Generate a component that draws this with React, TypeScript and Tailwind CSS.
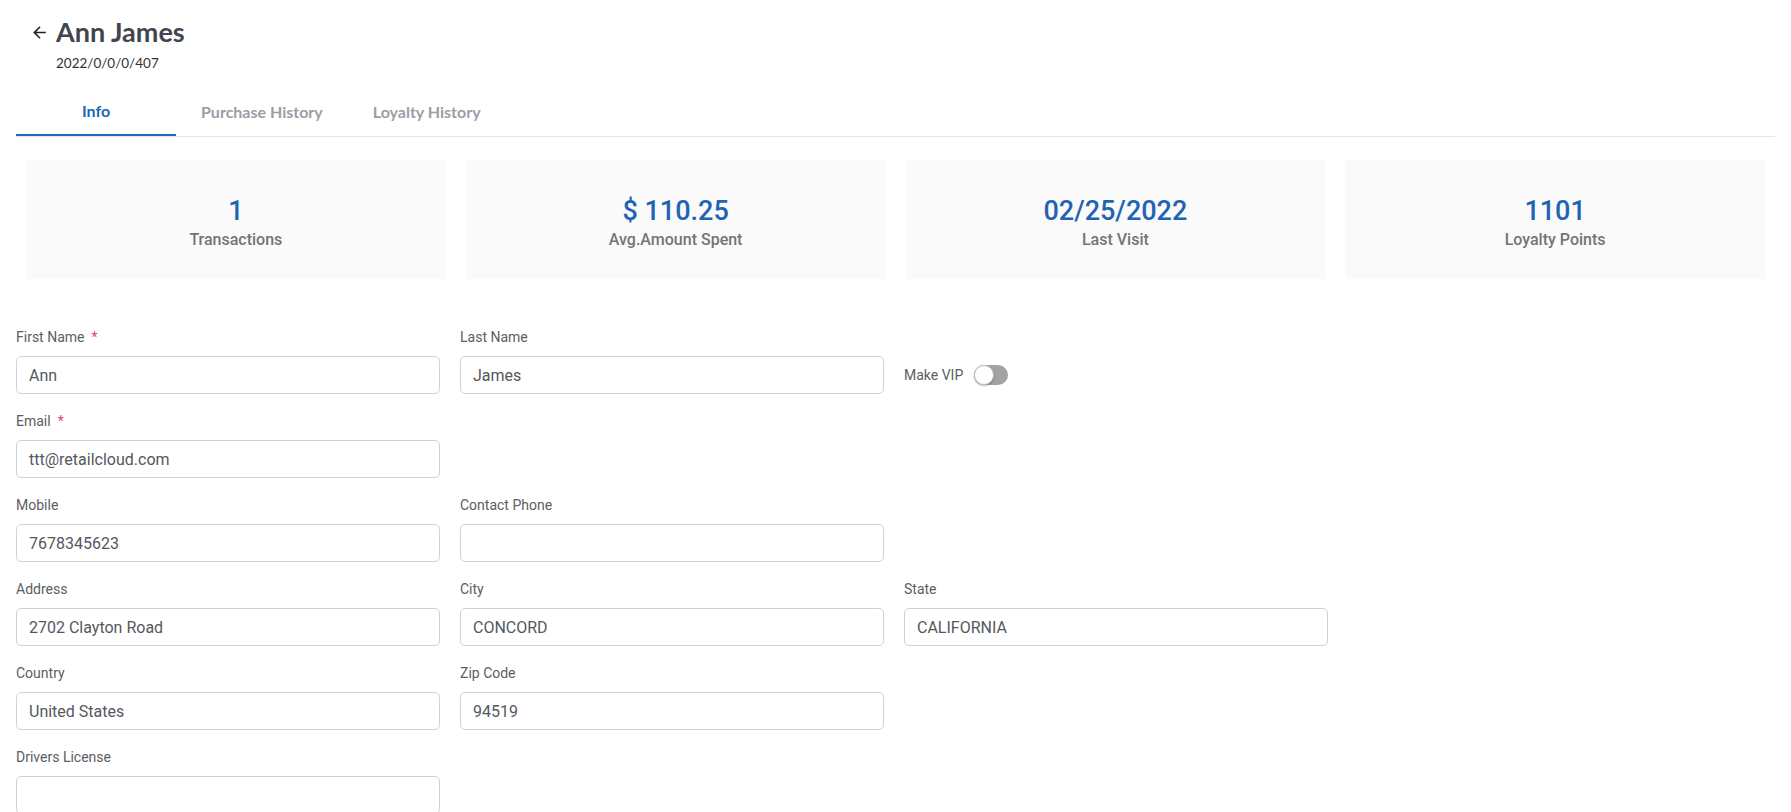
import React from 'react';

interface Stat {
    value: string;
    label: string;
}

interface Field {
    label: string;
    value: string;
    required?: boolean;
}

const stats: Stat[] = [
    { value: '1', label: 'Transactions' },
    { value: '$ 110.25', label: 'Avg.Amount Spent' },
    { value: '02/25/2022', label: 'Last Visit' },
    { value: '1101', label: 'Loyalty Points' },
];

function FormField({ label, value, required }: Field) {
    return (
        <div className="flex flex-col">
            <label className="text-[14px] leading-[20px] text-[#5a5e64] mb-[9px]">
                {label}
                {required && <span className="ml-[7px] text-[#ec3d74]">*</span>}
            </label>
            <input
                readOnly
                value={value}
                className="h-[38px] w-full rounded-[5px] border border-[#cfd3d9] bg-white px-[12px] text-[16px] text-[#54585e] outline-none"
            />
        </div>
    );
}

function VipToggle() {
    return (
        <div className="flex h-[38px] items-center gap-[10px] self-end">
            <span className="text-[14px] text-[#5a5e64]">Make VIP</span>
            <div className="relative ml-[1px] h-[20px] w-[34px] rounded-full bg-[#a3a3a3]">
                <div className="absolute left-0 top-0 h-[20px] w-[20px] rounded-full border border-[#c4c4c4] bg-white shadow-[0_1px_2px_rgba(0,0,0,0.3)]" />
            </div>
        </div>
    );
}

export default function App() {
    return (
        <div className="min-h-screen bg-white px-4 font-['Roboto',sans-serif]">
            {/* Header */}
            <div className="pt-[15px]">
                <div className="flex items-center">
                    <svg viewBox="0 0 24 24" className="ml-[14px] h-[19px] w-[19px] text-[#222]" fill="currentColor">
                        <path d="M20 11H7.83l5.59-5.59L12 4l-8 8 8 8 1.41-1.41L7.83 13H20v-2z" />
                    </svg>
                    <h1 className="ml-[7px] font-['Lato',sans-serif] text-[27px] font-bold leading-[34px] text-[#41454c]">
                        Ann James
                    </h1>
                </div>
                <p className="mt-[6px] pl-[40px] font-['Lato',sans-serif] text-[13.5px] leading-[16px] text-[#333]">
                    2022/0/0/0/407
                </p>
            </div>

            {/* Tabs */}
            <div className="mt-[17px] flex border-b border-[#e6e6e6] font-['Lato',sans-serif] text-[16px] font-bold">
                <button className="-mb-px h-[48px] min-w-[160px] border-b-2 border-[#2066b6] px-6 text-[#2066b6]">
                    Info
                </button>
                <button className="h-[48px] px-[25px] text-[#9a9ea5]">Purchase History</button>
                <button className="h-[48px] px-[25px] text-[#9a9ea5]">Loyalty History</button>
            </div>

            {/* Stats */}
            <div className="mt-[23px] grid grid-cols-4 gap-5 px-[10px]">
                {stats.map((s) => (
                    <div key={s.label} className="flex h-[119px] flex-col items-center bg-[#fafafa] pt-[35px]">
                        <div className="text-[27px] font-medium leading-[32px] text-[#1f63b3]">{s.value}</div>
                        <div className="text-[16px] font-medium leading-[26px] text-[#747474]">{s.label}</div>
                    </div>
                ))}
            </div>

            {/* Form */}
            <div className="mt-[48px] grid grid-cols-[424px_424px_424px] gap-x-5 gap-y-[17px]">
                <FormField label="First Name" value="Ann" required />
                <FormField label="Last Name" value="James" />
                <VipToggle />

                <FormField label="Email" value="ttt@retailcloud.com" required />
                <div />
                <div />

                <FormField label="Mobile" value="7678345623" />
                <FormField label="Contact Phone" value="" />
                <div />

                <FormField label="Address" value="2702 Clayton Road" />
                <FormField label="City" value="CONCORD" />
                <FormField label="State" value="CALIFORNIA" />

                <FormField label="Country" value="United States" />
                <FormField label="Zip Code" value="94519" />
                <div />

                <FormField label="Drivers License" value="" />
            </div>
        </div>
    );
}
